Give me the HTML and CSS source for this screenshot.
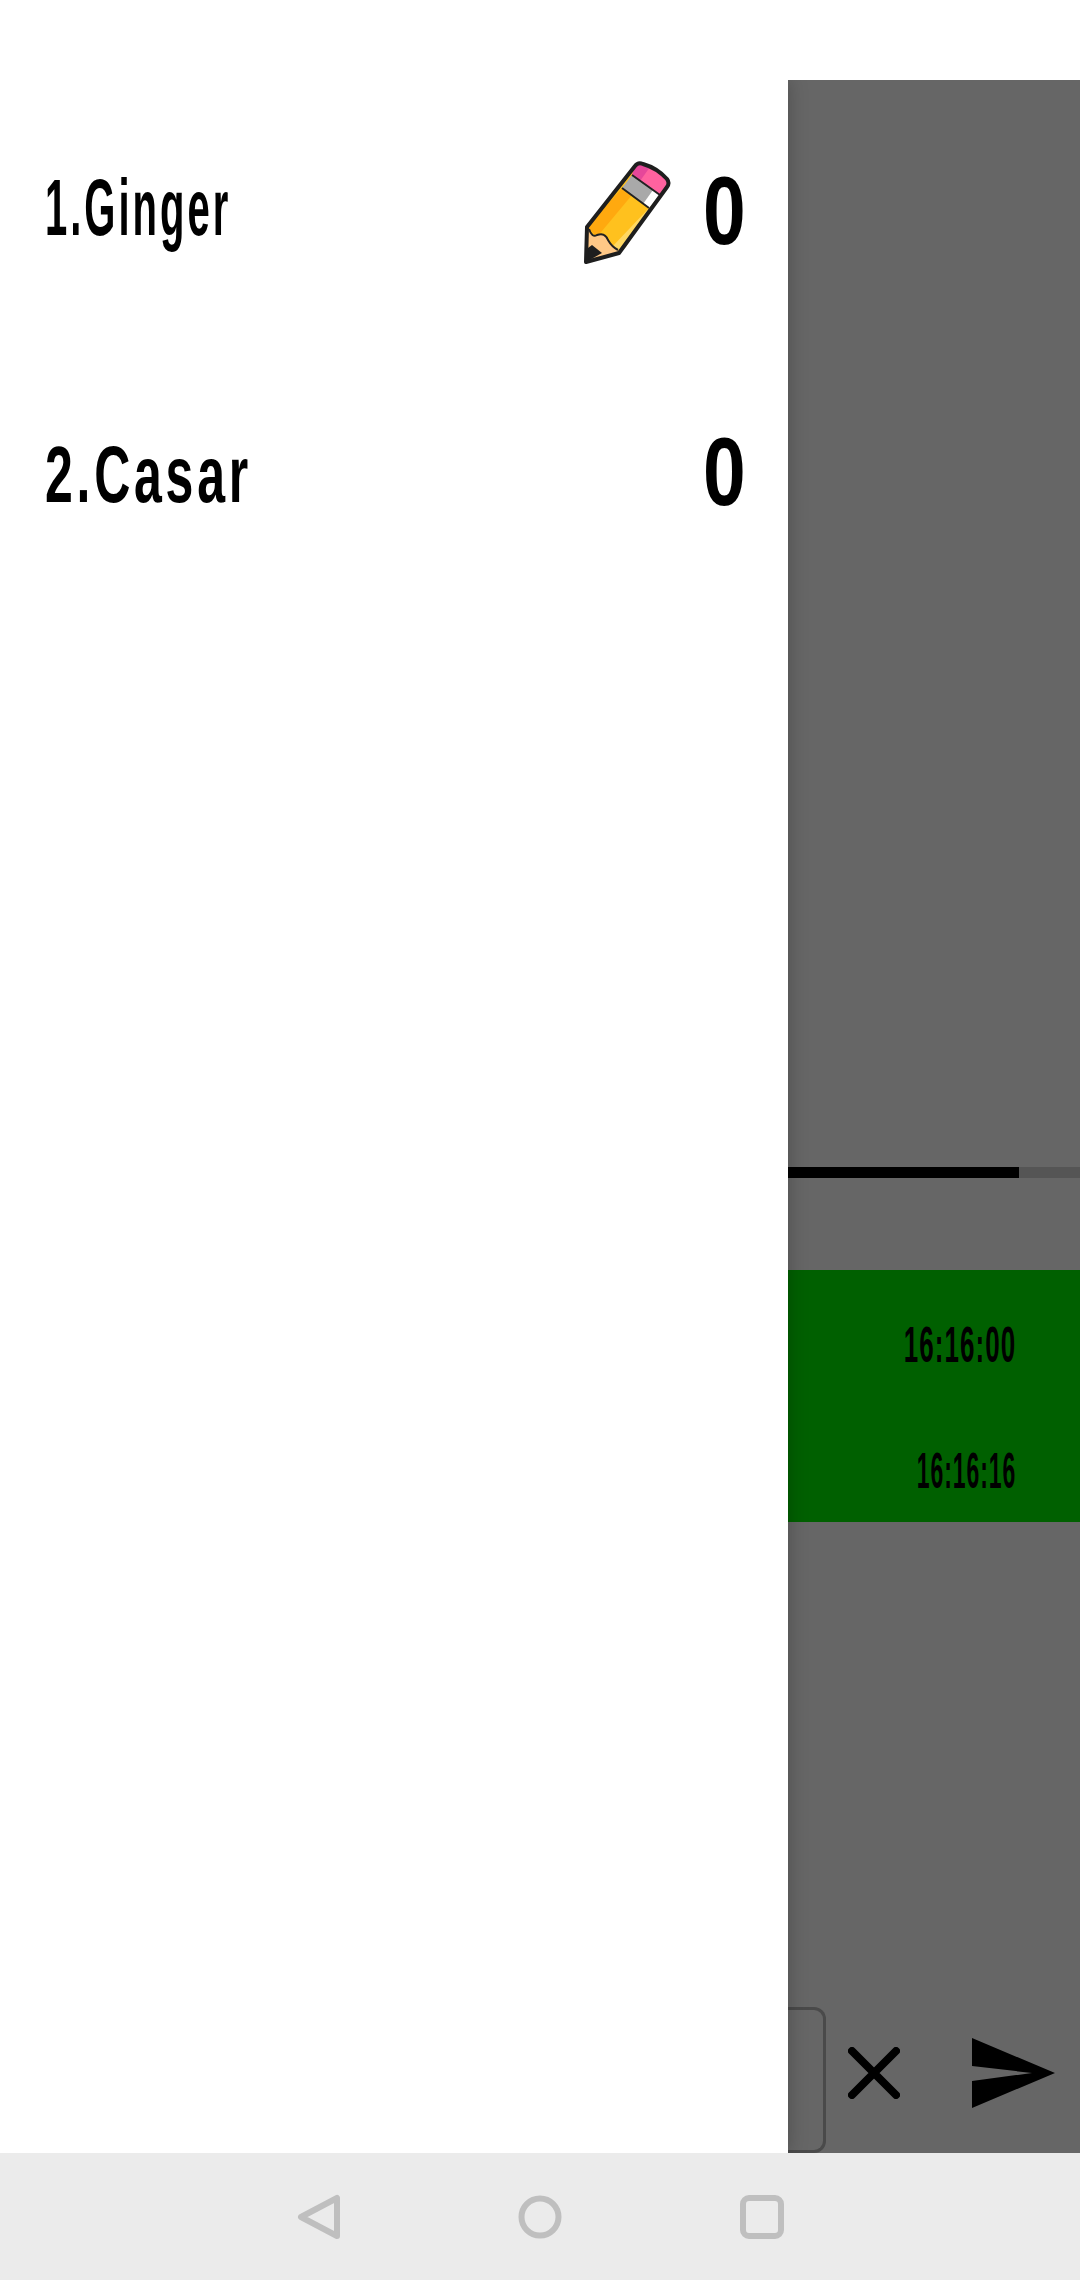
FILE: index.html
```html
<!DOCTYPE html>
<html lang="en">
<head>
    <meta charset="UTF-8">
    <meta name="viewport" content="width=device-width, initial-scale=1.0">
    <title>Drawing game - players</title>
    <link rel="stylesheet" href="styles.css">
</head>
<body>
    <div class="status-strip"></div>

    <div class="main">
        <!-- Players drawer -->
        <div class="drawer">
            <div class="player">
                <span class="name"><span class="hand hand-ginger">1.Ginger</span></span>
                <svg class="pencil" viewBox="0 0 95 112" width="95" height="112">
                    <path d="M6 107 L7 72 L55 11 Q58 7 63 9 Q77 13 87 24 Q90 28 87 32 L39 98 Z" fill="#ffc11e"/>
                    <path d="M7 72 L42 33 L52 40 L17 82 Z" fill="#ffa90f"/>
                    <path d="M69 53 L76 45 L46 92 L39 98 L32 92 Z" fill="#ffd862"/>
                    <path d="M55 11 Q58 7 63 9 Q77 13 87 24 Q90 28 87 32 L80 40 L52 20 Z" fill="#ff629f"/>
                    <path d="M55 11 Q58 7 63 9 L70 12 L60 26 L52 20 Z" fill="#e6479a"/>
                    <path d="M52 20 L80 40 L69 53 L42 33 Z" fill="#a9a9a9"/>
                    <path d="M73 35 L80 40 L69 53 L63 49 Z" fill="#fff"/>
                    <path d="M7 72 L9 74 Q12 83 17 80 Q25 77 28 85 Q32 92 38 95 L39 98 L6 107 Z" fill="#ffc886"/>
                    <path d="M6 107 L8 93 L12 90 L22 98 Z" fill="#1e1e1e"/>
                    <path d="M52 20 L80 40 M42 33 L69 53 M9 74 Q12 83 17 80 Q25 77 28 85 Q32 92 38 95" fill="none" stroke="#222" stroke-width="2"/>
                    <path d="M6 107 L7 72 L55 11 Q58 7 63 9 Q77 13 87 24 Q90 28 87 32 L39 98 Z" fill="none" stroke="#1e1e1e" stroke-width="4" stroke-linejoin="round"/>
                </svg>
                <span class="score">0</span>
            </div>
            <div class="player player-low">
                <span class="name"><span class="hand hand-casar">2.Casar</span></span>
                <span class="score">0</span>
            </div>
        </div>

        <!-- Game panel behind the drawer -->
        <div class="panel">
            <div class="timer"><div class="timer-fill"></div></div>

            <div class="message">
                <div class="time"><span class="hand-time">16:16:00</span></div>
                <div class="time"><span class="hand-time hand-time-thin">16:16:16</span></div>
            </div>

            <div class="input-row">
                <div class="input-box"></div>
                <svg class="close-icon" viewBox="0 0 52 52" width="52" height="52">
                    <path d="M4 4 L48 48 M48 4 L4 48" stroke="#000" stroke-width="8" stroke-linecap="round"/>
                </svg>
                <svg class="send-icon" viewBox="0 0 83 70" width="83" height="70">
                    <path d="M0 0 L83 35 L0 70 L0 43 L60 35 L0 28 Z" fill="#000"/>
                </svg>
            </div>
        </div>
    </div>

    <div class="nav-bar">
        <svg viewBox="0 0 44 46" width="44" height="46">
            <path d="M41 4 L41 42 L5 23 Z" fill="none" stroke="#bfbfbf" stroke-width="6" stroke-linejoin="round"/>
        </svg>
        <svg viewBox="0 0 44 46" width="44" height="46">
            <circle cx="22" cy="23" r="18.5" fill="none" stroke="#bfbfbf" stroke-width="6"/>
        </svg>
        <svg viewBox="0 0 44 46" width="44" height="46">
            <rect x="3" y="4" width="38" height="38" rx="6" fill="none" stroke="#bfbfbf" stroke-width="6"/>
        </svg>
    </div>
</body>
</html>
```

FILE: styles.css
```css
* { box-sizing: border-box; }
body {
    margin: 0;
    width: 1080px;
    height: 2280px;
    display: flex;
    flex-direction: column;
    overflow: hidden;
    background: #fff;
    font-family: "Liberation Sans Narrow", "Liberation Sans", sans-serif;
    color: #000;
}
.status-strip {
    height: 80px;
    background: #fff;
    position: relative;
    z-index: 2;
}
.main {
    flex: 1;
    display: flex;
    min-height: 0;
}
.drawer {
    width: 788px;
    flex-shrink: 0;
    background: #fff;
    box-shadow: 0 0 18px rgba(0, 0, 0, 0.25);
    position: relative;
    z-index: 1;
}
.player {
    height: 261px;
    display: flex;
    align-items: center;
    padding: 0 49px 0 45px;
}
.name {
    flex: 1;
    font-size: 80px;
    font-weight: bold;
    letter-spacing: 6px;
    padding-bottom: 6px;
}
.player-low .name {
    padding: 6px 0 0;
}
.hand {
    display: inline-block;
    transform-origin: left center;
}
.hand-ginger { transform: scaleX(0.5); }
.hand-casar { transform: scaleX(0.625); }
.pencil {
    margin-right: 24px;
}
.score {
    font-size: 96px;
    font-weight: bold;
    width: 40px;
    text-align: center;
    line-height: 100px;
    display: inline-block;
    transform: scaleX(0.8);
}
.panel {
    flex: 1;
    display: flex;
    flex-direction: column;
    background: #666;
    padding-top: 1087px;
    overflow: hidden;
}
.timer {
    height: 11px;
    background: #555;
}
.timer-fill {
    width: 231px;
    height: 100%;
    background: #000;
}
.message {
    margin-top: 92px;
    height: 252px;
    padding-top: 25px;
    background: #006000;
}
.time {
    height: 100px;
    margin-bottom: 26px;
    line-height: 100px;
    text-align: right;
    padding-right: 64px;
    font-size: 50px;
    font-weight: bold;
    letter-spacing: 2px;
}
.hand-time {
    display: inline-block;
    transform: scaleX(0.52);
    transform-origin: right center;
}
.hand-time-thin { transform: scaleX(0.46); }
.input-row {
    margin-top: auto;
    height: 146px;
    display: flex;
    align-items: flex-start;
}
.input-box {
    width: 38px;
    height: 146px;
    border: 3px solid #4a4a4a;
    border-left: none;
    border-radius: 0 12px 12px 0;
}
.close-icon {
    margin: 40px 0 0 22px;
}
.send-icon {
    margin: 31px 0 0 72px;
}
.nav-bar {
    height: 127px;
    background: #ebebeb;
    display: flex;
    justify-content: center;
    align-items: center;
    gap: 178px;
    position: relative;
    z-index: 2;
}
```
